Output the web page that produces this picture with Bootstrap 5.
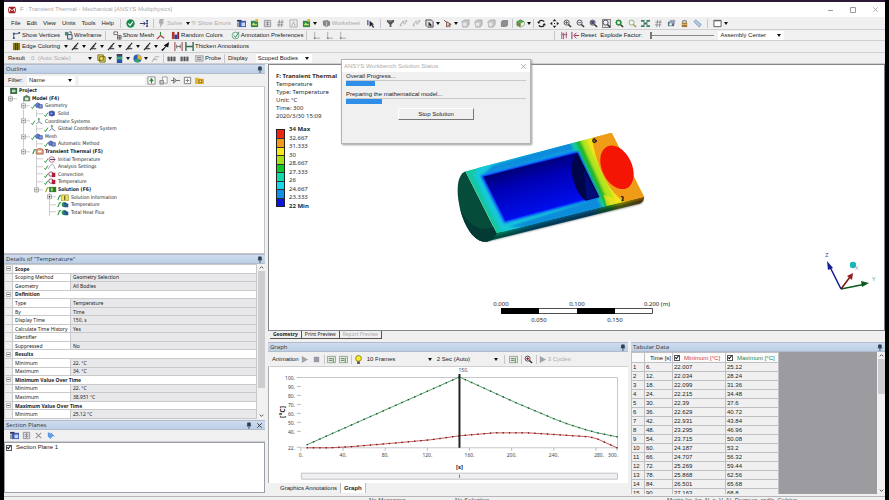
<!DOCTYPE html>
<html lang="en">
<head>
<meta charset="utf-8">
<meta name="viewport" content="width=device-width, initial-scale=1">
<title>F : Transient Thermal - Mechanical [ANSYS Multiphysics]</title>
<link href="https://cdn.jsdelivr.net/npm/bootstrap@5.3.0/dist/css/bootstrap.min.css" rel="stylesheet">
<style>
:root{--line:#b4b4b8;--bg:#f0f0f1;--ui:"Liberation Sans","Open Sans",Arial,sans-serif;--wide:"Noto Sans","Open Sans",sans-serif}
body{font:6px/9px var(--ui);color:#222;background:#000;overflow:hidden}
svg{display:block;flex:none}
button,input,select{font:inherit;color:inherit}
button{border:0;background:none;padding:0;white-space:nowrap}
select{appearance:none;border:0;background:#fff;padding:0 2px;border-radius:0}
.frame{border-top:2px solid #2b1a38;margin:0 4px;background:var(--bg)}
.titlebar{height:15px;background:#fff;color:#a9a9ae;padding:0 6px 0 4px}
.bar{height:12px;border-bottom:1px solid #cfcfd2;padding-left:4px;flex:none}
.bar.low1{height:11px}
.bar.tall{height:13px}
.bar.gtools{height:15px}
.menu{padding:0 3px}
.ib{width:13px;height:10px;display:flex;align-items:center;justify-content:center;flex:none}
.tight .ib{width:12px}
.ib svg,.tb svg{width:9px;height:9px}
.tb{display:flex;align-items:center;gap:1px;flex:none}
.dim{color:#a9a9ae}
.vr2{width:1px;height:9px;background:#c6c6ca;flex:none;margin:0 3px}
.vr2.slim{margin:0 1px}
.dd{width:5px;height:10px;display:flex;align-items:center;flex:none}
.dd::before,.pick::after{content:"";border:2px solid transparent;border-top:3px solid #111;border-bottom:0}
.pick{display:flex;align-items:center;background:#fff;height:9px;padding-right:3px}
.pick.plain{background:none}
.pick select{flex:1;min-width:0;background:none;height:9px}
.slide{appearance:none;width:64px;height:8px;background:linear-gradient(#888,#888) center/100% 1px no-repeat}
.slide::-webkit-slider-thumb{appearance:none;width:2px;height:7px;background:#777}
.grow2{flex:2}.grow1{flex:1}
.w48{width:48px}.w56{width:56px}.w66{width:66px}.w70{width:70px}
.flin{width:66px;height:9px;min-width:0}
.work{gap:3px;min-height:0}
.side{flex:0 0 261px}
.head{height:10px;flex:none;font:6px/8px "Open Sans",var(--ui);background:linear-gradient(#cfdcee,#bccfe6);border:1px solid #b3bccb;border-width:1px 0;padding:0 2px;color:#333}
.head svg{width:7px;height:7px}
.planehead{margin-top:1px!important}
.tree{height:129px;margin-top:0;display:grid;grid-template-rows:repeat(17,minmax(0,1fr));font:5px/7px "DejaVu Sans Condensed","Liberation Sans",sans-serif}
.tree li{display:flex;align-items:center;min-height:0}
.cell{width:13px;height:100%;flex:none}
.tree .ico{width:15px;height:7px}
.outline{height:167px;background:#fff;border:1px solid #c4c4c8;border-width:0 1px 1px 0}
.grid1{border-collapse:collapse;width:100%;height:155px;font:5px/6px var(--wide);background:#fff}
.grid1 td,.grid1 th{border:1px solid #c9c9cc;padding:0 2px;white-space:nowrap;height:8px}
.grid1 .ex{width:7px;background:#f0f0f1;padding:0 1px}
.grid1 .ex i{display:block;width:5px;height:5px;border:1px solid #bbb;background:linear-gradient(#777,#777) center/3px 1px no-repeat #fff}
.grid1 .k{width:58px}
.grid1 .v{background:#e8e8ea}
.sb{width:8px;background:#f1f1f2;flex:none;display:flex;flex-direction:column;align-items:center}
.sb svg{width:7px;height:7px}
.sb i{width:7px;background:#cdcdd0}
.long{height:117px}.short{height:35px}
.planes{flex:1;background:#fff;border:1px solid #9aa0aa;margin-bottom:3px;padding:0 1px}
.tick{appearance:none;width:6px;height:6px;border:1px solid #555;background:#fff;margin:0;flex:none;position:relative}
.tick:checked::after{content:"";position:absolute;left:1px;top:-1px;width:2px;height:4px;border:solid #111;border-width:0 1px 1px 0;transform:rotate(40deg)}
.right,.gpanel{min-width:0}
.vwrap{position:relative}
.view{position:relative;height:267px;background:#fff;border:1px solid #85858c;overflow:hidden}
.note{padding:7px 0 0 7px;font:6px/8px var(--wide);color:#2b2b2b}
.legend2{padding:5px 0 0 7px;font:6px/8px var(--wide);color:#2b2b2b}
.legend2 .sw{width:9px;height:78px;border:1px solid #222;display:grid;grid-auto-rows:1fr;margin-top:4px}
.legend2 .sw i+i{border-top:1px solid #333}
.legend2 .lb{height:85px;display:grid;grid-auto-rows:1fr;margin-left:4px}
.model,.ruler2,.triad{position:absolute}
.model{left:171px;top:55px;width:220px;height:135px}
.ruler2{left:222px;top:235px;width:190px;height:24px}
.triad{right:6px;top:183px;width:62px;height:48px}
svg text{font-family:var(--wide)}
.dlg{position:absolute;left:73px;top:-5px;width:190px;height:85px;background:#f0f0f1;border:1px solid #b4b4b8;box-shadow:1px 1px 2px #999;z-index:3}
.dlg .dt{height:12px;background:#fff;color:#aaa;padding:0 3px 0 2px}
.lab{line-height:8px}
.meter{height:6px;border-top:1px solid #c9c9cc;background:none;border-radius:0}
.meter .progress-bar{background:#2f8fe8}
.stop{width:76px;height:12px;border:1px solid #fff;border-right-color:#777;border-bottom-color:#777;background:#f0f0f1}
.vtabs{height:8px;font:5px/7px var(--wide);padding-left:2px}
.vtabs button{border-right:1px solid #555;border-bottom:1px solid #555;padding:0 3px}
.low{margin-top:3px;gap:3px;min-height:0;padding-bottom:2px}
.chartbox{flex:1;background:#fff;min-height:0;border-left:1px solid #aaa}
#chart text{font-size:5px;fill:#444}
#chart .axt{font-size:6px;font-weight:700;fill:#222}
#chart .big{font-size:7px}
.btabs{height:11px;padding-left:9px}
.btabs button{padding:0 3px;height:10px;border-right:1px solid #bbb}
.btabs .on{background:#fff;font-weight:700}
.tabular{flex:0 0 254px}
.tabwrap{height:0}
.greybox{background:#9c9ca0;overflow:hidden}
.grid2{border-collapse:collapse;background:#f0f0f0;line-height:8px;table-layout:fixed;width:147px}
.grid2 td,.grid2 th{border:1px solid #c0c0c4;height:9px;padding:0 1px;font-weight:400;white-space:nowrap;overflow:hidden}
.grid2 th{background:#fafafa;height:10px}
.grid2 label{display:flex;align-items:center;gap:4px}
.c0{width:13px}.c1{width:28px}.c2{width:53px}
.status{height:4px;overflow:hidden;border-top:1px solid #b8b8bc;line-height:7px;color:#444;white-space:nowrap;flex:none}
.st0{flex:0 0 365px}.st1{flex:0 0 86px}.st2{flex:0 0 212px}
</style>
<script src="https://cdn.jsdelivr.net/npm/bootstrap@5.3.0/dist/js/bootstrap.bundle.min.js"></script>
</head>
<body>
<svg width="0" height="0" class="position-absolute" aria-hidden="true"><defs>
<g id="mg"><circle cx="4" cy="4" r="2.8" fill="#eef" stroke="#444"/><path d="M6 6l3 3" stroke="#333" stroke-width="1.6"/></g>
<symbol id="ok" viewBox="0 0 10 10"><circle cx="5" cy="5" r="4.6" fill="#158a4a"/><path d="M2.6 5l2 2 3-4" fill="none" stroke="#fff" stroke-width="1.3"/></symbol>
<symbol id="dots" viewBox="0 0 10 10"><path d="M1 5h6M5 3l2 2-2 2" fill="none" stroke="#335"/><path d="M8 1h2v2H8zM8 4h2v2H8zM8 7h2v2H8z" fill="#2d3f9c"/></symbol>
<symbol id="bolt" viewBox="0 0 10 10"><path d="M3 0h5L6 3h2L3 10l1-5H2z" fill="#a9a9ae"/></symbol>
<symbol id="win" viewBox="0 0 10 10"><path d="M2 2h8v7H2z" fill="#3c5fb4"/><path d="M0 1h5v2H0z" fill="#333a66"/><path d="M5 4h4v4H5z" fill="#c7d7f6"/><path d="M1 4v5" stroke="#444"/></symbol>
<symbol id="pic" viewBox="0 0 10 10"><path d="M1 2h8v7H1z" fill="#2f8a4a"/><path d="M2 7l2-3 2 2 1-1 1 2z" fill="#d9e86b"/><path d="M6 0h3v3H6z" fill="#e0b93c"/></symbol>
<symbol id="gw" viewBox="0 0 10 10"><path d="M1.500 1.500h7v7h-7zM3 4h4M3 6h4M5 2v6" fill="#e2e2e4" stroke="#8f8f95"/></symbol>
<symbol id="hash" viewBox="0 0 10 10"><path d="M4 1L3 9M7 1L6 9M1.500 3.500h7M1 6.500h7" fill="none" stroke="#8b8b92"/></symbol>
<symbol id="boxa" viewBox="0 0 10 10"><path d="M1 1h8v8H1zM3 8l2-5 2 5" fill="none" stroke="#aaaab0"/></symbol>
<symbol id="sheet" viewBox="0 0 10 10"><path d="M1 2l5-1 3 2v4L5 9 1 7z" fill="#85858c"/><path d="M5 3v5" stroke="#ccc"/></symbol>
<symbol id="cur" viewBox="0 0 10 10"><path d="M2 1v6" stroke="#4c62b8" stroke-width="1.500"/><path d="M4 2v7l2-2 2 3 1-1-2-3h2z" fill="#222"/></symbol>
<symbol id="fun" viewBox="0 0 10 10"><path d="M1 1h8v2L6 6v3H4V6L1 3z" fill="#555"/><path d="M2 2h5" stroke="#9cbf8e"/></symbol>
<symbol id="pts" viewBox="0 0 10 10"><path d="M1 7l3-4 2 3 3-4" fill="none" stroke="#aaa"/><path d="M1 6h2v2H1zM4 2h2v2H4zM7 1h2v2H7z" fill="#bbb"/></symbol>
<symbol id="selb" viewBox="0 0 10 10"><path d="M1 1h6l2 2v6H3L1 7z" fill="#dcdce2" stroke="#444"/><path d="M4 3v5l1-1 2 2V6z" fill="#222"/></symbol>
<symbol id="arr" viewBox="0 0 10 10"><path d="M1 1l3 3" stroke="#555"/><path d="M4 3v6l2-2 1 2 1-1-1-2h2z" fill="#e8d9c8" stroke="#6b3a30" stroke-width=".9"/></symbol>
<symbol id="gc" viewBox="0 0 10 10"><path d="M1 3l3-2h5v5L7 9H2z" fill="#c4c4c8" stroke="#9a9aa0" stroke-width=".7"/><path d="M2 4h4v4H2z" fill="#e7e7e9"/></symbol>
<symbol id="gs" viewBox="0 0 10 10"><path d="M1 3l2-2h6v6L7 9H1z" fill="#8d8d94"/></symbol>
<symbol id="cube" viewBox="0 0 10 10"><path d="M1 3l4-2 4 2v4L5 9 1 7z" fill="#58ad4a" stroke="#2c6330" stroke-width=".7"/><path d="M5 5l4-2v4L5 9z" fill="#e9efe6"/><path d="M2 5h3v3z" fill="#cc4438"/></symbol>
<symbol id="rot" viewBox="0 0 10 10"><path d="M8 3a3.500 3 0 0 0-6 0M2 7a3.500 3 0 0 0 6 0" fill="none" stroke="#222" stroke-width="1.400"/><path d="M0 3h4L2 5.500zM10 7H6l2-2.500z" fill="#222"/></symbol>
<symbol id="pan" viewBox="0 0 10 10"><path d="M5 0l2 2.500H3zM5 10L3 7.500h4zM0 5l2.500-2v4zM10 5L7.500 3v4z" fill="#222"/><path d="M4.500 4.500h1v1h-1z"/></symbol>
<symbol id="mgp" viewBox="0 0 10 10"><use href="#mg"/><path d="M2.500 4h3M4 2.500v3" stroke="#333" stroke-width=".8"/></symbol>
<symbol id="mgm" viewBox="0 0 10 10"><use href="#mg"/><path d="M2.500 4h3" stroke="#333" stroke-width=".8"/></symbol>
<symbol id="mgb" viewBox="0 0 10 10"><path d="M.5.500h9v9h-9z" fill="#e3e3ea" stroke="#555" stroke-width=".8"/><use href="#mg"/></symbol>
<symbol id="mgd" viewBox="0 0 10 10"><use href="#mg"/><circle cx="4" cy="4" r="2" fill="#447"/></symbol>
<symbol id="mgg" viewBox="0 0 10 10"><use href="#mg"/><circle cx="4" cy="4" r="2.500" fill="#d5f3d5" stroke="#1d8a35" stroke-width="1.300"/></symbol>
<symbol id="mgl" viewBox="0 0 10 10"><circle cx="4" cy="4" r="2.800" fill="#eff7ea" stroke="#8aa085"/><path d="M6 6l3 3" stroke="#b28d4a" stroke-width="1.500"/></symbol>
<symbol id="iso" viewBox="0 0 10 10"><path d="M0 1h4v2H0zM6 1h4v2H6zM3 4h4v2H3zM0 7h4v2H0zM6 7h4v2H6z" fill="#39826c"/><path d="M2 3l6 4M8 3L2 7" stroke="#555" stroke-width=".6"/></symbol>
<symbol id="cam" viewBox="0 0 10 10"><path d="M1 3h7v5H1z" fill="#666b80"/><path d="M3 1h6v4H3z" fill="#9aa2b8"/><circle cx="4" cy="6" r="1.500" fill="#cfe"/></symbol>
<symbol id="lck" viewBox="0 0 10 10"><path d="M3 4V2h4v2" fill="none" stroke="#666"/><path d="M2 4h6v5H2z" fill="#a5773b"/><path d="M2 6h6" stroke="#e3bd6c"/></symbol>
<symbol id="tag" viewBox="0 0 10 10"><path d="M1 3l2-2 6 5-2 3z" fill="#b4cbe8" stroke="#6583aa" stroke-width=".8"/></symbol>
<symbol id="box" viewBox="0 0 10 10"><path d="M1 1.500h8v7H1z" fill="#fff" stroke="#555"/><path d="M1 2h8" stroke="#555"/></symbol>
<symbol id="vtx" viewBox="0 0 10 10"><path d="M2 8V3h5" fill="none" stroke="#555"/><path d="M1 7h2v2H1zM7 1h2v2H7zM1 2h2v2H1z" fill="#33468f"/></symbol>
<symbol id="wire" viewBox="0 0 10 10"><path d="M1 1h4v4H1z" fill="#4d8a7b"/><path d="M4 4h5v5H4z" fill="#dfe9f0" stroke="#345" /><path d="M6 1h2v2" fill="none" stroke="#345"/></symbol>
<symbol id="mesh" viewBox="0 0 10 10"><path d="M1 1h4v3H1zM5 5h4v4H5zM5 7h4M7 5v4" fill="#fff" stroke="#444" stroke-width=".8"/></symbol>
<symbol id="ax" viewBox="0 0 10 10"><path d="M5 5V1" stroke="#2a8c3a" stroke-width="1.200"/><path d="M5 5L1 9" stroke="#c33" stroke-width="1.200"/><path d="M5 5l4 3" stroke="#a33" stroke-width="1.200"/></symbol>
<symbol id="rnd" viewBox="0 0 10 10"><path d="M1 1h3v8H1z" fill="#b3362b"/><path d="M4 4h3v5H4z" fill="#2c3f9d"/><path d="M7 1h2v8H7z" fill="#8b2222"/></symbol>
<symbol id="ann" viewBox="0 0 10 10"><circle cx="5" cy="5" r="3.800" fill="#e4f3ea" stroke="#6aa284"/><path d="M3 5l2 2 4-6" fill="none" stroke="#357d55"/></symbol>
<symbol id="tri" viewBox="0 0 10 10"><path d="M3 1v7h6" fill="none" stroke="#aaa"/><path d="M2 7h2v2H2z" fill="#888"/></symbol>
<symbol id="exp" viewBox="0 0 10 10"><path d="M2 1v8M4 2v7M7 1v7M2 4h6" stroke="#a25a7a" stroke-width="1.100"/></symbol>
<symbol id="rst" viewBox="0 0 10 10"><path d="M1 1v8M9 5H4M6 2L3 5l3 3" fill="none" stroke="#935" stroke-width="1.100"/></symbol>
<symbol id="edg" viewBox="0 0 10 10"><path d="M1 1h8v8H1z" fill="#8a7a16"/><path d="M4 1v8M6 1v8" stroke="#3c3508"/></symbol>
<symbol id="ln" viewBox="0 0 10 10"><path d="M1 9l7-8M2 7.500h6" fill="none" stroke="#222" stroke-width="1.200"/><path d="M4 4h2v2H4z" fill="#333"/></symbol>
<symbol id="fat" viewBox="0 0 10 10"><path d="M0 9l5-4-2-1 6-4-1 6-2-1-4 5z" fill="#111"/></symbol>
<symbol id="hh" viewBox="0 0 10 10"><path d="M1 0v10M9 0v10" stroke="#a34a4a" stroke-width="1.200"/><path d="M3 3v4M7 3v4M3 5h4" stroke="#666"/></symbol>
<symbol id="hg" viewBox="0 0 10 10"><path d="M1 0v10M9 0v10M1 5h8" stroke="#2f6b4d" stroke-width="1.500"/></symbol>
<symbol id="yel" viewBox="0 0 10 10"><path d="M1 1h6v6H1zM3 3h6v6H3z" fill="#f2e36a" stroke="#6b6416"/></symbol>
<symbol id="cont" viewBox="0 0 10 10"><path d="M2 0h6v10H2z" fill="#2b50a8"/><path d="M2 3h6v3H2z" fill="#43b36c"/><path d="M2 0h6v2H2z" fill="#444"/></symbol>
<symbol id="ball" viewBox="0 0 10 10"><circle cx="5" cy="5" r="4.500" fill="#2a5fc0"/><path d="M5 .5a4.500 4.500 0 0 1 4 6.500L5 5z" fill="#e2b72b"/><path d="M1 7a4.500 4.500 0 0 0 7 1L5 5z" fill="#2fa866"/></symbol>
<symbol id="bar3" viewBox="0 0 10 10"><path d="M1 9l4-6h4M2 6h5" fill="none" stroke="#aaa"/></symbol>
<symbol id="mx" viewBox="0 0 10 10"><path d="M0 3h10v5H0z" fill="#9c9ca2"/><path d="M2 3v5M5 3v5M8 3v5" stroke="#444"/></symbol>
<symbol id="prb" viewBox="0 0 10 10"><path d="M0 2h9v6H0z" fill="#dadade" stroke="#888" stroke-width=".8"/><path d="M2 4h5M2 6h5" stroke="#666" stroke-width=".8"/></symbol>
<symbol id="pin" viewBox="0 0 8 8"><path d="M3 1h3v3H3zM2 4.500h5M4.500 5v3" fill="#345" stroke="#234" stroke-width=".9"/></symbol>
<symbol id="x" viewBox="0 0 8 8"><path d="M1.500 1.500l5 5M6.500 1.500l-5 5" stroke="currentColor" stroke-width="1.100"/></symbol>
<symbol id="del" viewBox="0 0 10 10"><path d="M2 2l6 6M8 2L2 8" stroke="#9a8f94" stroke-width="1.200"/></symbol>
<symbol id="up" viewBox="0 0 8 8"><path d="M2 5l2-2 2 2" fill="none" stroke="#444"/></symbol>
<symbol id="dn" viewBox="0 0 8 8"><path d="M2 3l2 2 2-2" fill="none" stroke="#444"/></symbol>
<symbol id="rf" viewBox="0 0 10 10"><path d="M1 1h8v8H1z" fill="#fff" stroke="#888"/><path d="M3 6l2-3 2 3M5 3v5" fill="none" stroke="#2a8a3c" stroke-width="1.200"/></symbol>
<symbol id="hand" viewBox="0 0 10 10"><path d="M4 1h5v7H4z" fill="#fff" stroke="#999"/><path d="M1 9V5h4v4z" fill="#c3c3ca" stroke="#888"/></symbol>
<symbol id="brn" viewBox="0 0 10 10"><path d="M0 5h4M5 5h5M3 2v6M3 2l3 3-3 3" fill="none" stroke="#666"/></symbol>
<symbol id="pls" viewBox="0 0 10 10"><path d="M1.500 1.500h7v7h-7zM5 3v4M3 5h4" fill="#fff" stroke="#777"/></symbol>
<symbol id="fld" viewBox="0 0 10 10"><path d="M0 2h4l1 1h5v6H0z" fill="#e1b52d"/><path d="M4 4h4v4H4z" fill="#8f5a1a"/><path d="M5 5h2v2H5z" fill="#fff3b5"/></symbol>
<symbol id="play" viewBox="0 0 10 10"><path d="M2 1l7 4-7 4z" fill="#a2a2a8"/></symbol>
<symbol id="sq" viewBox="0 0 10 10"><path d="M2 2h6v6H2z" fill="#9a9aa6"/></symbol>
<symbol id="gl" viewBox="0 0 10 10"><path d="M.5 1.500h9v7h-9z" fill="#e2eee0" stroke="#8f9f8c"/><path d="M2 4h4M2 6h4M7 3v5" stroke="#5a7a5a"/></symbol>
<symbol id="bulb" viewBox="0 0 10 10"><circle cx="5" cy="3.800" r="3.200" fill="#f8ee2d" stroke="#6b6500" stroke-width=".8"/><path d="M3.500 7h3v3h-3z" fill="#555"/></symbol>
<symbol id="mgr" viewBox="0 0 10 10"><use href="#mg"/><path d="M2.500 4h3M4 2.500v3" stroke="#b22" stroke-width="1.300"/></symbol>
<symbol id="blu" viewBox="0 0 10 10"><path d="M2 1l6 4-3 4-3-3z" fill="#5c9be8"/><path d="M5 2l4 4" stroke="#2b62b4"/></symbol>
<g id="ck"><path d="M.5 6l1.200 1.500L4.500 3" fill="none" stroke="#23943a" stroke-width="1.100"/></g>
<symbol id="t-proj" viewBox="0 0 15 8"><path d="M6 1h8v7H6z" fill="#3c6a4b"/><path d="M8 3h4v3H8z" fill="#b9dcb4"/></symbol>
<symbol id="t-model" viewBox="0 0 15 8"><path d="M6 2l4-2 4 2v5H6z" fill="#5a7d64"/><path d="M8 3h4v3H8z" fill="#dff0c8"/></symbol>
<symbol id="t-geo" viewBox="0 0 15 8"><use href="#ck"/><path d="M5 3l2-2 3 1v4H6z" fill="#5f7fd0" stroke="#2f3f93" stroke-width=".7"/><path d="M9 3h4v4H9z" fill="#7e9be0" stroke="#2f3f93" stroke-width=".7"/></symbol>
<symbol id="t-sol" viewBox="0 0 15 8"><use href="#ck"/><path d="M6 2l3-1 3 1v4L9 7 6 6z" fill="#3a52b8" stroke="#25337e" stroke-width=".6"/><path d="M7.500 3h2v2h-2z" fill="#9eb4f0"/></symbol>
<symbol id="t-cs" viewBox="0 0 15 8"><use href="#ck"/><path d="M9 4V1M9 4L6 7M9 4l4 3" stroke="#5c74a0" fill="none"/><path d="M8 0h2v2H8z" fill="#63a06e"/></symbol>
<symbol id="t-th" viewBox="0 0 15 8"><path d="M2 7l2-5h2" fill="none" stroke="#23943a" stroke-width="1.300"/><path d="M6 2l4-2 4 2v5H6z" fill="#e3a07a" stroke="#8d4a33" stroke-width=".7"/><path d="M8 3h4v2H8z" fill="#fff"/></symbol>
<symbol id="t-it" viewBox="0 0 15 8"><use href="#ck"/><circle cx="9" cy="4" r="3.200" fill="#fbeef2" stroke="#a04a6d" stroke-width=".8"/><path d="M7 4h6" stroke="#335"/></symbol>
<symbol id="t-as" viewBox="0 0 15 8"><use href="#ck"/><path d="M5 7l2-4 3-2 3 6" fill="none" stroke="#6a86a8" stroke-dasharray="1 .5"/></symbol>
<symbol id="t-cv" viewBox="0 0 15 8"><use href="#ck"/><circle cx="8" cy="3.500" r="2.500" fill="#fff" stroke="#5b2438" stroke-width=".8"/><path d="M9 2h4v5H9z" fill="#b01c3c"/></symbol>
<symbol id="t-so" viewBox="0 0 15 8"><path d="M2 7l2-5h2" fill="none" stroke="#8aa61b" stroke-width="1.300"/><path d="M6 1h8v6H6z" fill="#2f7a33"/><path d="M8 2h2v4H8z" fill="#9bdf5c"/></symbol>
<symbol id="t-si" viewBox="0 0 15 8"><path d="M1 7l2-5h2" fill="none" stroke="#23943a" stroke-width="1.200"/><path d="M5 1h8v7H5z" fill="#efe65b" stroke="#8f8820" stroke-width=".7"/><path d="M9 2v5" stroke="#222"/></symbol>
<symbol id="t-rs" viewBox="0 0 15 8"><path d="M1 7l2-5h2" fill="none" stroke="#23943a" stroke-width="1.200"/><circle cx="8.500" cy="4" r="3" fill="#2c8a52"/><path d="M8 2l5 1v4H9z" fill="#26569c"/></symbol>
</defs></svg>

<div class="frame vh-100 d-flex flex-column">
  <header class="titlebar d-flex align-items-center flex-shrink-0">
    <svg width="8" height="8" viewBox="0 0 10 10" class="me-1"><path d="M1 1h8l1 4-1 4H1L0 5z" fill="#a41e22"/><path d="M2 7V3l3 3 3-3v4" fill="none" stroke="#fff" stroke-width="1.200"/></svg>
    <span>F : Transient Thermal - Mechanical [ANSYS Multiphysics]</span>
    <div class="ms-auto d-flex align-items-center gap-3">
      <button aria-label="Minimize"><svg width="6" height="6" viewBox="0 0 6 6"><path d="M0 3.500h5" stroke="#999"/></svg></button>
      <button aria-label="Maximize"><svg width="6" height="6" viewBox="0 0 6 6"><path d="M.5.500h5v5h-5z" fill="none" stroke="#999"/></svg></button>
      <button aria-label="Close"><svg width="7" height="7"><use href="#x"/></svg></button>
    </div>
  </header>

  <div class="bar tall d-flex align-items-center" id="r1"></div>
  <div class="bar low1 d-flex align-items-center" id="r2"></div>
  <div class="bar d-flex align-items-center" id="r3"></div>
  <div class="bar low1 d-flex align-items-center" id="r4"></div>

  <main class="work flex-grow-1 d-flex">
    <aside class="side d-flex flex-column">
      <h2 class="head d-flex justify-content-between align-items-center m-0">Outline<svg><use href="#pin"/></svg></h2>
      <div class="bar tall d-flex align-items-center">
        <label for="flt">Filter:</label>
        <div class="pick ms-1 w48"><select id="flt"><option>Name</option></select></div>
        <input class="border-0 p-0 ms-1 flin" aria-label="Filter text">
        <div class="d-flex tight" id="ftools"></div>
      </div>
      <div class="outline"><ul class="tree list-unstyled mb-0" id="tree"></ul></div>
      <h2 class="head d-flex justify-content-between align-items-center m-0">Details of "Temperature"<svg><use href="#pin"/></svg></h2>
      <div class="d-flex">
        <table class="grid1"><tbody id="details"></tbody></table>
        <div class="sb"><svg><use href="#up"/></svg><i class="long"></i><svg class="mt-auto"><use href="#dn"/></svg></div>
      </div>
      <h2 class="head planehead d-flex align-items-center m-0">Section Planes<svg class="ms-auto me-1"><use href="#pin"/></svg><svg><use href="#x"/></svg></h2>
      <div class="bar d-flex align-items-center tight" id="ptools"></div>
      <div class="planes"><label class="d-flex align-items-center"><input type="checkbox" class="tick me-1" checked>Section Plane 1</label></div>
    </aside>

    <section class="flex-grow-1 d-flex flex-column right">
      <div class="vwrap">
        <div class="view">
          <div class="note"><b>F: Transient Thermal</b><br>Temperature<br>Type: Temperature<br>Unit: °C<br>Time: 300<br>2020/3/30 15:09</div>
          <div class="legend2 d-flex"><div class="sw" id="sw"></div><div class="lb"><b>34 Max</b><span>32.667</span><span>31.333</span><span>30</span><span>28.667</span><span>27.333</span><span>26</span><span>24.667</span><span>23.333</span><b>22 Min</b></div></div>
          <svg class="model" viewBox="0 0 660 405" role="img" aria-label="Temperature field on half cylinder">
            <defs>
              <linearGradient id="side" x1="170" x2="612" y1="0" y2="0" gradientUnits="userSpaceOnUse"><stop offset="0" stop-color="#007a55"/><stop offset=".25" stop-color="#005a7c"/><stop offset=".65" stop-color="#0a4e80"/><stop offset=".76" stop-color="#1b7a20"/><stop offset=".84" stop-color="#8a8a00"/><stop offset="1" stop-color="#8a4b00"/></linearGradient>
              <linearGradient id="cav" x1="260" y1="120" x2="310" y2="290" gradientUnits="userSpaceOnUse"><stop offset="0" stop-color="#000068"/><stop offset=".35" stop-color="#0000b4"/><stop offset="1" stop-color="#0010f8"/></linearGradient>
              <filter id="soft"><feGaussianBlur stdDeviation="3"/></filter>
              <clipPath id="top"><path d="M76 154L515 38L612 230L170 340z"/></clipPath>
            </defs>
            <path d="M168 338L612 229q2 16-14 22L134 366z" fill="url(#side)"/><path d="M155 352L610 238q0 10-12 14L134 366z" fill="#001e26" opacity=".6" filter="url(#soft)"/>
            <path d="M76 154C50 166 48 215 60 266C75 325 105 368 140 365Q160 362 170 340z" fill="#054c3a"/>
            <path d="M60 266C75 325 105 368 140 365Q160 362 170 340L160 320C120 340 80 310 60 266z" fill="#033a35"/>
            <g clip-path="url(#top)">
              <path d="M76 154L515 38L612 230L170 340z" fill="#14c8a0"/>
              <g filter="url(#soft)">
              <path d="M118 130L430 40L520 250L190 345L150 270L100 165z" fill="#14c8d8"/>
              <path d="M160 135L400 62L412 86L130 162zM205 320L480 232L500 262L260 322z" fill="#0a8cdc"/>
              <path d="M120 165L416 88L482 228L192 312z" fill="#1896f0"/>
              <path d="M390 66L410 60L505 258L485 262z" fill="#16c8a0"/>
              <path d="M404 60L424 55L524 260L496 260z" fill="#1fb82a"/>
              <path d="M420 58L440 50L545 260L512 262z" fill="#b5e41e"/>
              <path d="M436 54L640 0V260H535z" fill="#f5e31c"/>
              </g>
              <path d="M456 50L640 0V240L560 250C505 220 465 130 456 50z" fill="#f09c18"/>
              <path d="M490 225L545 240L540 252L500 258z" fill="#f5e31c" opacity=".7"/>
            </g>
            <path d="M124 168L414 94L478 232L194 307z" fill="#0030ff" filter="url(#soft)"/>
            <path d="M130 170L412 98L472 228L196 303z" fill="url(#cav)"/>
            <path d="M412 98Q385 130 400 180T438 242L478 231z" fill="#000448"/>
            <path d="M432 150L474 230L440 240" fill="#00108c" opacity=".7"/>
            <ellipse cx="531" cy="142" rx="45" ry="69" transform="rotate(-25 531 142)" fill="#f51505"/>
            <g fill="none" stroke="#222" stroke-width="4"><path d="M466 56q-9 2-7 8t8 1-4-4M543 230q9-1 6 6t-3 6 5-1"/></g>
          </svg>
          <svg class="ruler2" viewBox="0 0 190 24"><path d="M10.500 8.500h151v5h-151z" fill="#fff" stroke="#222" stroke-width=".8"/><path d="M10 8h38v6H10zM86 8h38v6H86z" fill="#000"/><g font-size="6" fill="#222" text-anchor="middle"><text x="10" y="6">0.000</text><text x="86" y="6">0.100</text><text x="166" y="6">0.200 (m)</text><text x="48" y="22">0.050</text><text x="124" y="22">0.150</text></g></svg>
          <svg class="triad" viewBox="0 0 62 48"><g stroke-width="1.500"><path d="M25 41L13 17" stroke="#141e96"/><path d="M25 41L50 36" stroke="#0b5a1c"/><path d="M25 41L34 29" stroke="#7a1616"/></g><path d="M11 13l6 7-5 2z" fill="#141e96"/><path d="M53 35l-8-2 1 6z" fill="#0b5a1c"/><path d="M37 25l-1 7-5-4z" fill="#951c1c"/><circle cx="37" cy="17" r="3.200" fill="#1bb4b8"/><g font-size="6"><text x="9" y="9" fill="#3b47a8">Z</text><text x="56" y="33" fill="#4fae8d">Y</text><text x="39" y="22" fill="#a99">X</text></g></svg>
        </div>
        <div class="dlg" role="dialog" aria-label="ANSYS Workbench Solution Status">
          <div class="dt d-flex justify-content-between align-items-center"><span>ANSYS Workbench Solution Status</span><button aria-label="Close"><svg width="7" height="7"><use href="#x"/></svg></button></div>
          <div class="px-1">
            <div class="lab">Overall Progress...</div>
            <div class="progress meter"><div class="progress-bar" style="width:16%"></div></div>
            <div class="mt-1 lab">Preparing the mathematical model...</div>
            <div class="progress meter"><div class="progress-bar" style="width:20%"></div></div>
            <div class="d-flex justify-content-center mt-1"><button class="stop">Stop Solution</button></div>
          </div>
        </div>
      </div>
      <div class="vtabs d-flex"><button><b>Geometry</b></button><button>Print Preview</button><button class="dim">Report Preview</button></div>
      <div class="flex-grow-1 d-flex low">
        <section class="flex-grow-1 d-flex flex-column gpanel">
          <h2 class="head d-flex justify-content-between align-items-center m-0">Graph<svg><use href="#pin"/></svg></h2>
          <div class="bar gtools tight d-flex align-items-center" id="r5"></div>
          <div class="chartbox"><svg id="chart" class="w-100" viewBox="269 366 360 117" role="img" aria-label="Temperature over time"></svg></div>
          <div class="btabs d-flex"><button>Graphics Annotations</button><button class="on">Graph</button></div>
        </section>
        <section class="tabular d-flex flex-column">
          <h2 class="head d-flex justify-content-between align-items-center m-0">Tabular Data<svg><use href="#pin"/></svg></h2>
          <div class="d-flex flex-grow-1 overflow-hidden tabwrap">
            <div class="flex-grow-1 greybox"><table class="grid2"><colgroup><col class="c0"><col class="c1"><col class="c2"><col class="c2"></colgroup><thead><tr><th></th><th class="text-end">Time [s]</th><th><label class="text-danger"><input type="checkbox" class="tick" checked>Minimum [°C]</label></th><th><label class="text-success"><input type="checkbox" class="tick" checked>Maximum [°C]</label></th></tr></thead><tbody id="tab"></tbody></table></div>
            <div class="sb"><svg><use href="#up"/></svg><i class="short"></i><svg class="mt-auto"><use href="#dn"/></svg></div>
          </div>
        </section>
      </div>
    </section>
  </main>
  <footer class="status d-flex"><span class="st0"></span><span class="st1">No Messages</span><span class="st2">No Selection</span><span>Metric (m, kg, N, s, V, A)&nbsp; Degrees&nbsp; rad/s&nbsp; Celsius</span></footer>
</div>
<script>
const $=i=>document.getElementById(i);
const ic=n=>`<button class="ib" aria-label="${n}"><svg><use href="#${n}"/></svg></button>`;
const dd='<button class="dd" aria-label="More"></button>',vr='<span class="vr2"></span>';
const tb=(n,t,c='')=>`<button class="tb ${c}">${n?`<svg><use href="#${n}"/></svg>`:''}${t}</button>`;
const pick=(t,c,l)=>`<div class="pick ${c}"><select aria-label="${l}"><option>${t}</option></select></div>`;
const many=s=>s.split(' ').map(n=>n==='v'?dd:n==='|'?vr:n==='!'?'<span class="vr2 slim"></span>':ic(n)).join('');
$('r1').innerHTML=['File','Edit','View','Units','Tools','Help'].map(t=>`<button class="menu">${t}</button>`).join('')+vr+many('ok dots |')+tb('bolt','Solve','dim me-1')+dd+tb('','?/ Show Errors','dim me-1')+many('win pic gw hash boxa pic v')+tb('sheet','Worksheet','dim mx-1')+many('cur | fun pts pts selb v arr v gc gc gc gs ! cube v ! rot pan mgp mgm mgd mgb mgg mgl iso hash cam lck tag | box v');
$('r2').innerHTML=tb('vtx','Show Vertices','ms-1 me-1')+tb('wire','Wireframe')+vr+tb('mesh','Show Mesh','ms-1')+ic('ax')+tb('rnd','Random Colors','mx-1')+tb('ann','Annotation Preferences','ms-1')+vr+many('tri tri tri')+'<span class="grow2"></span>'+vr+ic('exp')+tb('rst','Reset')+'<label for="ef" class="mx-1">Explode Factor:</label><input id="ef" type="range" class="slide mx-1" value="0">'+pick('Assembly Center','w66','Explode origin')+'<span class="grow1"></span>';
$('r3').innerHTML=tb('edg','Edge Coloring','ms-1 me-1')+dd+many('ln v ln v ln v ln v ln v fat hh')+tb('hg','Thicken Annotations');
$('r4').innerHTML='<label for="rs">Result</label>'+pick('0. (Auto Scale)','plain dim w66 ms-1','Result scale')+many('yel v cont v ball v bar3 ! mx mx')+tb('prb','Probe','ms-1')+vr+'<span class="me-1">Display</span>'+pick('Scoped Bodies','w56 ms-1','Display bodies');
document.querySelector('#r4 select').id='rs';
$('ftools').innerHTML=many('rf hand brn pls fld');
$('ptools').innerHTML=many('win gw del blu');
$('r5').innerHTML='<span>Animation</span>'+many('play sq ! gl gl ! bulb')+pick('10 Frames','plain w70','Frames')+pick('2 Sec (Auto)','plain w66','Duration')+vr+many('gl ! mgr !')+tb('play','3 Cycles','dim');
const T=[['','t-proj','Project',1],['-','t-model','Model (F4)',1],[' -','t-geo','Geometry'],[' |c','t-sol','Solid'],[' -','t-cs','Coordinate Systems'],[' |c','t-cs','Global Coordinate System'],[' -','t-geo','Mesh'],[' |c','t-geo','Automatic Method'],[' -','t-th','Transient Thermal (F5)',1],['  c','t-it','Initial Temperature'],['  c','t-as','Analysis Settings'],['  c','t-cv','Convection'],['  c','t-cv','Temperature'],['  -','t-so','Solution (F6)',1],['   +','t-si','Solution Information'],['   c','t-rs','Temperature'],['   c','t-rs','Total Heat Flux']];
const cell=c=>`<svg class="cell" viewBox="0 0 13 8" preserveAspectRatio="xMidYMid slice">${c===' '?'':c==='|'?'<path d="M6.500 0v8" stroke="#ccc"/>':c==='c'?'<path d="M6.500 0v8M7 4h6" stroke="#ccc" fill="none"/>':`<path d="M6.500 0v8M7 4h6" stroke="#ccc"/><path d="M4.500 2h4v4h-4z" fill="#fff" stroke="#999" stroke-width=".8"/><path d="M5.500 4h2${c==='+'?'M6.500 3v2':''}" stroke="#333" stroke-width=".8"/>`}</svg>`;
$('tree').innerHTML=T.map(([g,i,t,b])=>`<li>${[...g].map(cell).join('')}<svg class="ico"><use href="#${i}"/></svg>${b?`<b>${t}</b>`:t}</li>`).join('');
const D=['Scope',['Scoping Method','Geometry Selection'],['Geometry','All Bodies'],'Definition',['Type','Temperature'],['By','Time'],['Display Time','150. s'],['Calculate Time History','Yes'],['Identifier',''],['Suppressed','No'],'Results',['Minimum','22. °C'],['Maximum','34. °C'],'Minimum Value Over Time',['Minimum','22. °C'],['Maximum','38.951 °C'],'Maximum Value Over Time',['Minimum','25.12 °C']];
$('details').innerHTML=D.map(r=>typeof r==='string'?`<tr><td class="ex"><i></i></td><th colspan="2">${r}</th></tr>`:`<tr><td class="ex"></td><td class="k">${r[0]}</td><td class="v">${r[1]}</td></tr>`).join('');
$('sw').innerHTML=['#f52410','#f59a18','#f5e818','#a8e018','#10c828','#10dca8','#14d8ec','#1090e8','#0a14e4'].map(c=>`<i style="background:${c}"></i>`).join('');
const M=[22.007,22.034,22.099,22.215,22.39,22.629,22.931,23.295,23.715,24.187,24.707,25.269,25.868,26.501,27.163];
$('tab').innerHTML=M.map((m,i)=>`<tr><td>${i+1}</td><td>${(i+1)*6}.</td><td>${m}</td><td>${+(25.12+3.12*i).toFixed(2)}</td></tr>`).join('');
const G=[[307,444],[460,376],[517,402],[555,418],[568,423],[587,429],[598,432],[618,436]],R=[[307,447],[330,447],[350,446],[398,442],[431,439],[460,435],[495,432],[528,432],[560,434],[590,436],[598,438],[618,447]];
const at=(P,x)=>{for(let i=1;i<P.length;i++)if(x<=P[i][0]){const[a,b]=[P[i-1],P[i]];return a[1]+(b[1]-a[1])*(x-a[0])/(b[0]-a[0])}return P.at(-1)[1]};
const dots=(P,c)=>{let s='';for(let t=6;t<=300;t+=6){const x=301+t*317/300;s+=`<rect x="${x-.7}" y="${at(P,Math.max(307,Math.min(618,x)))-.7}" width="1.4" height="1.4" fill="${c}"/>`}return s};
let c='<path d="M301 376.500h317.500V447H301" fill="none" stroke="#c8c8cc"/>';
[[100,377],[90,386],[80,395],[70,404],[60,413],[50,422],[40,431],[22,447]].forEach(([v,y])=>c+=`<text x="295" y="${y+2}" text-anchor="end">${v}.</text><path d="M297 ${y-.5}h4" stroke="#bbb"/>`);
[0,40,80,120,160,200,240,280,300].forEach(v=>{const x=301+v*317/300;c+=`<text x="${v===300?614:v===280?600:x}" y="456" text-anchor="middle">${v}.</text><path d="M${x} 447v3" stroke="#bbb"/>`});
const pl=(P,k)=>`<polyline points="${P.join(' ')}" fill="none" stroke="${k}" stroke-width=".9"/>`;
c+=pl(G,'#3c9a58')+pl(R,'#c04848')+dots(G,'#1d4a2c')+dots(R,'#6b1c1c');
c+='<path d="M460 373v74" stroke="#222" stroke-width="2"/><text x="464" y="371" text-anchor="middle">150.</text><text x="460" y="468" class="axt" text-anchor="middle">[s]</text><text class="axt big" text-anchor="middle" transform="translate(285 411) rotate(-90)">[°C]</text><path d="M301.500 472.500h317v6h-317z" fill="#f0f0f2" stroke="#c4c4c8"/><path d="M460 474v3" stroke="#777"/>';
$('chart').innerHTML=c;
</script>
</body>
</html>
